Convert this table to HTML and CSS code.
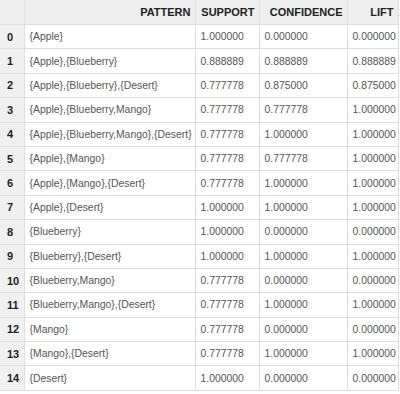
FILE: index.html
```html
<!DOCTYPE html>
<html>
<head>
<meta charset="utf-8">
<link rel="stylesheet" href="styles.css">
</head>
<body>
<table class="grid">
  <colgroup>
    <col class="w-idx">
    <col class="w-pattern">
    <col class="w-support">
    <col class="w-conf">
    <col class="w-lift">
  </colgroup>
  <thead>
    <tr>
      <th class="idx"></th>
      <th>PATTERN</th>
      <th>SUPPORT</th>
      <th>CONFIDENCE</th>
      <th>LIFT</th>
    </tr>
  </thead>
  <tbody>
    <tr><td class="idx">0</td><td>{Apple}</td><td>1.000000</td><td>0.000000</td><td>0.000000</td></tr>
    <tr><td class="idx">1</td><td>{Apple},{Blueberry}</td><td>0.888889</td><td>0.888889</td><td>0.888889</td></tr>
    <tr><td class="idx">2</td><td>{Apple},{Blueberry},{Desert}</td><td>0.777778</td><td>0.875000</td><td>0.875000</td></tr>
    <tr><td class="idx">3</td><td>{Apple},{Blueberry,Mango}</td><td>0.777778</td><td>0.777778</td><td>1.000000</td></tr>
    <tr><td class="idx">4</td><td>{Apple},{Blueberry,Mango},{Desert}</td><td>0.777778</td><td>1.000000</td><td>1.000000</td></tr>
    <tr><td class="idx">5</td><td>{Apple},{Mango}</td><td>0.777778</td><td>0.777778</td><td>1.000000</td></tr>
    <tr><td class="idx">6</td><td>{Apple},{Mango},{Desert}</td><td>0.777778</td><td>1.000000</td><td>1.000000</td></tr>
    <tr><td class="idx">7</td><td>{Apple},{Desert}</td><td>1.000000</td><td>1.000000</td><td>1.000000</td></tr>
    <tr><td class="idx">8</td><td>{Blueberry}</td><td>1.000000</td><td>0.000000</td><td>0.000000</td></tr>
    <tr><td class="idx">9</td><td>{Blueberry},{Desert}</td><td>1.000000</td><td>1.000000</td><td>1.000000</td></tr>
    <tr><td class="idx">10</td><td>{Blueberry,Mango}</td><td>0.777778</td><td>0.000000</td><td>0.000000</td></tr>
    <tr><td class="idx">11</td><td>{Blueberry,Mango},{Desert}</td><td>0.777778</td><td>1.000000</td><td>1.000000</td></tr>
    <tr><td class="idx">12</td><td>{Mango}</td><td>0.777778</td><td>0.000000</td><td>0.000000</td></tr>
    <tr><td class="idx">13</td><td>{Mango},{Desert}</td><td>0.777778</td><td>1.000000</td><td>1.000000</td></tr>
    <tr><td class="idx">14</td><td>{Desert}</td><td>1.000000</td><td>0.000000</td><td>0.000000</td></tr>
  </tbody>
</table>
</body>
</html>
```
FILE: styles.css
```css
html, body {
  margin: 0;
  padding: 0;
  background: #ffffff;
}
.grid {
  border-collapse: collapse;
  table-layout: fixed;
  width: 398px;
  font-family: "Liberation Sans", Arial, sans-serif;
  font-size: 10.4px;
}
.w-idx { width: 24px; }
.w-pattern { width: 171px; }
.w-support { width: 64px; }
.w-conf { width: 88px; }
.w-lift { width: 51px; }
.grid th, .grid td {
  border: 1px solid #dedede;
  padding: 0 5px;
  white-space: nowrap;
  overflow: hidden;
}
.grid th {
  height: 24px;
  background: #eeeeee;
  color: #222222;
  font-size: 11px;
  font-weight: bold;
  text-align: right;
  padding: 0 4px;
}
.grid td {
  height: 23.4px;
  color: #555555;
  text-align: left;
}
.grid td.idx {
  background: #f0f0f0;
  color: #222222;
  font-size: 11px;
  font-weight: bold;
  padding-left: 7px;
  padding-right: 0;
}
.grid tr > :first-child { border-left: none; }
.grid thead th { border-top: none; }
```
